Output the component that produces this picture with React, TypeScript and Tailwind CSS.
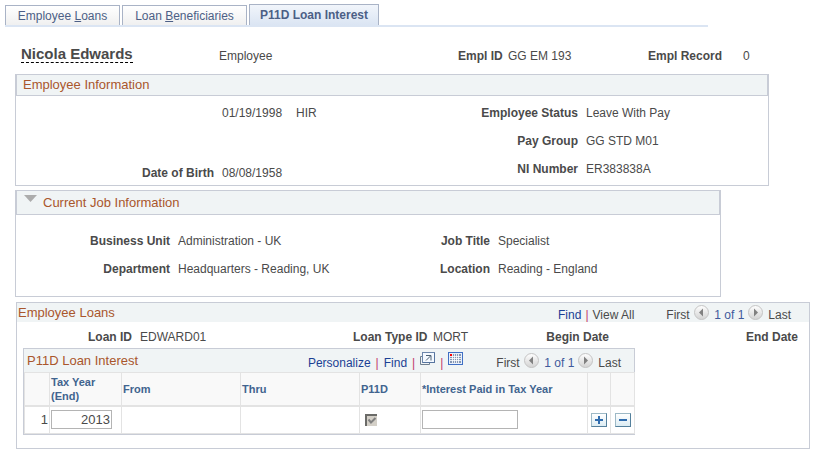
import type { ReactNode } from "react";

const tabs = [
  { before: "Employee ", key: "L", after: "oans", width: "w-[115px]" },
  { before: "Loan ", key: "B", after: "eneficiaries", width: "w-[125px]" },
];

const Label = ({ children }: { children: ReactNode }) => (
  <dt className="text-right font-bold whitespace-nowrap">{children}</dt>
);

const Value = ({ children }: { children?: ReactNode }) => <dd className="whitespace-nowrap">{children}</dd>;

const Bar = () => <span className="text-[#c0396b]">|</span>;

const Arrow = ({ dir }: { dir: "prev" | "next" }) => (
  <button type="button" aria-label={dir === "prev" ? "Previous" : "Next"} className="mb-1 shrink-0">
    <svg width="15" height="15" viewBox="0 0 15 15" className="block">
      <defs>
        <linearGradient id={`disc-${dir}`} x1="0" y1="0" x2="0" y2="1">
          <stop offset="0" stopColor="#ffffff" />
          <stop offset="1" stopColor="#d2d2d2" />
        </linearGradient>
      </defs>
      <circle cx="7.5" cy="7.5" r="7" fill={`url(#disc-${dir})`} stroke="#c4c4c4" />
      <path d={dir === "prev" ? "M9 3.5v8L5 7.5z" : "M6 3.5v8l4-4z"} fill="#808080" />
    </svg>
  </button>
);

const Pager = () => (
  <div className="flex items-center whitespace-nowrap">
    <span className="w-7">First</span>
    <Arrow dir="prev" />
    <span className="mx-[5px] w-[29px] text-center text-[#3f5a9c]">1 of 1</span>
    <Arrow dir="next" />
    <span className="ml-[5px]">Last</span>
  </div>
);

const PopOutIcon = () => (
  <svg width="15" height="14" viewBox="0 0 15 14" className="block">
    <path d="M2.5 4.5h-2v8h9v-2" fill="none" stroke="#6f7f90" />
    <rect x="2.5" y="0.5" width="12" height="10" fill="#f4f9ff" stroke="#6c86ab" />
    <path d="M3 10.5h11.5V1" fill="none" stroke="#56749f" />
    <path d="M6 3.5h5v5M10.5 4L6 8.5" fill="none" stroke="#4c6173" />
  </svg>
);

const GridIcon = () => (
  <svg width="15" height="14" viewBox="0 0 15 14" className="block">
    <rect x="0.5" y="0.5" width="14" height="12" fill="#e8f0fb" stroke="#3f6fc4" />
    <rect x="2" y="2" width="11" height="9" fill="#8496b3" />
    <path d="M2 4.5h11M2 6.5h11M2 8.5h11M4.5 2v9M6.5 2v9M8.5 2v9M10.5 2v9" stroke="#fff" strokeWidth="0.8" />
    <rect x="2" y="2" width="2" height="2" fill="#ff0000" />
  </svg>
);

const RowButton = ({ kind }: { kind: "add" | "delete" }) => (
  <button
    type="button"
    aria-label={kind === "add" ? "Add row" : "Delete row"}
    className="mx-auto flex h-[14px] w-4 items-center justify-center border border-t-[#9db9c6] border-r-[#54809c] border-b-[#54809c] border-l-[#9db9c6] bg-gradient-to-b from-white to-[#dcecf3]"
  >
    <svg width="8" height="8" viewBox="0 0 8 8">
      <path d={kind === "add" ? "M0 4h8M4 0v8" : "M0 4h8"} stroke="#2f6cae" strokeWidth="2" />
    </svg>
  </button>
);

const headers = [
  { text: "", width: "w-[25px]" },
  { text: "Tax Year (End)", width: "w-[72px]" },
  { text: "From", width: "w-[119px]" },
  { text: "Thru", width: "w-[119px]" },
  { text: "P11D", width: "w-[61px]" },
  { text: "*Interest Paid in Tax Year", width: "w-[167px]" },
  { text: "", width: "w-[23px]" },
  { text: "", width: "w-[24px]" },
];

export default function App() {
  return (
    <div className="bg-white pt-1 font-['Liberation_Sans',Arial,sans-serif] text-[12px] leading-4 text-[#4a4a4a]">
      <nav className="ml-[5px] flex w-full max-w-[703px] items-end border-b-2 border-[#dbe5f3] text-[#4c5f86]">
        {tabs.map((t) => (
          <a
            key={t.key}
            href="#"
            className={`mr-[2px] flex h-5 items-center justify-center border border-b-0 border-[#a9b3c6] bg-gradient-to-b from-white to-[#f0f0f0] whitespace-nowrap ${t.width}`}
          >
            <span>
              {t.before}
              <u>{t.key}</u>
              {t.after}
            </span>
          </a>
        ))}
        <a
          href="#"
          aria-current="page"
          className="flex h-[21px] w-[130px] items-center justify-center border border-b-0 border-[#a9b3c6] bg-gradient-to-b from-[#f1f5fb] to-[#dbe5f3] font-bold whitespace-nowrap"
        >
          P11D Loan Interest
        </a>
      </nav>

      <header className="grid h-[47px] grid-cols-[190px_1fr_42px_132px_72px_88px] items-start gap-x-2 pt-[18px] pr-[15px] pl-[21px]">
        <h1>
          <span className="inline-block border-b border-dashed border-black text-[15px] leading-[17px] font-bold">
            Nicola Edwards
          </span>
        </h1>
        <span className="pt-[3px]">Employee</span>
        <span className="pt-[3px] text-right font-bold whitespace-nowrap">Empl ID</span>
        <span className="pt-[3px]">GG EM 193</span>
        <span className="pt-[3px] text-right font-bold whitespace-nowrap">Empl Record</span>
        <span className="pt-[3px] pl-[15px]">0</span>
      </header>

      <main className="pr-[21px] pl-[15px]">
        <section className="mb-1 w-full max-w-[754px] border border-[#c8ccd6]">
          <h2 className="flex h-[21px] items-center border-x border-b border-[#c8ccd6] bg-[#f0f4f5] pl-[6px] text-[13px] text-[#a9562c]">
            Employee Information
          </h2>
          <div className="flex items-start justify-between pt-[3px] pb-[2px] leading-7">
            <dl className="grid grid-cols-[198px_1fr] gap-x-2 gap-y-9">
              <Label> </Label>
              <dd className="flex gap-[14px]">
                <span>01/19/1998</span>
                <span>HIR</span>
              </dd>
              <dt className="text-right leading-5 font-bold">Date of Birth</dt>
              <dd className="leading-5">08/08/1958</dd>
            </dl>
            <dl className="grid grid-cols-[110px_182px] gap-x-2">
              <Label>Employee Status</Label>
              <Value>Leave With Pay</Value>
              <Label>Pay Group</Label>
              <Value>GG STD M01</Value>
              <Label>NI Number</Label>
              <Value>ER383838A</Value>
            </dl>
          </div>
        </section>

        <section className="mb-[5px] w-full max-w-[706px] border border-[#c8ccd6]">
          <h2 className="flex h-6 items-center border-x border-b border-[#c8ccd6] bg-[#f0f4f5] pl-[7px] text-[13px] text-[#a9562c]">
            <button type="button" aria-label="Collapse section" className="mr-[6px] mb-2">
              <svg width="13" height="7" viewBox="0 0 13 7" className="block">
                <path d="M0 0h13L6.5 7z" fill="#acacac" />
              </svg>
            </button>
            Current Job Information
          </h2>
          <dl className="grid grid-cols-[154px_1fr_60px_222px] gap-x-2 pt-3 pb-[13px] leading-7">
            <Label>Business Unit</Label>
            <Value>Administration - UK</Value>
            <Label>Job Title</Label>
            <Value>Specialist</Value>
            <Label>Department</Label>
            <Value>Headquarters - Reading, UK</Value>
            <Label>Location</Label>
            <Value>Reading - England</Value>
          </dl>
        </section>

        <section className="ml-px border border-[#c8ccd6] pb-[13px]">
          <div className="flex h-[19px] items-center justify-between bg-[#f0f4f5] pr-[18px] pl-px">
            <h2 className="text-[13px] text-[#a9562c]">Employee Loans</h2>
            <div className="flex items-center gap-8 pt-1">
              <div className="flex gap-1 whitespace-nowrap">
                <a href="#" className="text-[#1b3f94]">Find</a>
                <Bar />
                <span>View All</span>
              </div>
              <Pager />
            </div>
          </div>
          <dl className="grid grid-cols-[115px_1fr_72px_100px_68px_181px] gap-x-2 pt-[7px] pr-[11px] pb-[3px]">
            <Label>Loan ID</Label>
            <Value>EDWARD01</Value>
            <Label>Loan Type ID</Label>
            <Value>MORT</Value>
            <Label>Begin Date</Label>
            <Label>End Date</Label>
          </dl>

          <div className="ml-[6px] w-full max-w-[612px] border border-[#c8ccd6]">
            <div className="flex h-[23px] items-center justify-between bg-[#f0f4f5] pr-[13px] pl-[3px]">
              <h3 className="text-[13px] text-[#a9562c]">P11D Loan Interest</h3>
              <div className="flex items-center gap-[33px] pt-1">
                <div className="flex items-center gap-[5px] whitespace-nowrap">
                  <a href="#" className="text-[#1b3f94]">Personalize</a>
                  <Bar />
                  <a href="#" className="text-[#1b3f94]">Find</a>
                  <Bar />
                  <button type="button" aria-label="View in new window" className="mb-2"><PopOutIcon /></button>
                  <Bar />
                  <button type="button" aria-label="Download table" className="mb-2"><GridIcon /></button>
                </div>
                <Pager />
              </div>
            </div>
            <table className="w-full table-fixed border-collapse">
              <thead>
                <tr className="h-[33px] border-t border-b-2 border-[#e3e3e3] bg-[#f9f9f9] text-left text-[11px] leading-[14px] text-[#41648f]">
                  {headers.map((h, i) => (
                    <th key={i} className={`border-x border-[#e3e3e3] p-px font-bold ${h.width}`}>
                      {h.text}
                    </th>
                  ))}
                </tr>
              </thead>
              <tbody>
                <tr className="h-[28px] border-b border-[#e3e3e3] text-[13px] [&>td]:border-x [&>td]:border-[#e3e3e3] [&>td]:p-px">
                  <td className="text-right">1</td>
                  <td>
                    <input aria-label="Tax Year (End)" defaultValue="2013" className="block h-[19px] w-[61px] border border-[#b4b4b4] pr-px text-right" />
                  </td>
                  <td></td>
                  <td></td>
                  <td>
                    <div className="relative ml-1 h-3 w-3">
                      <input
                        type="checkbox"
                        aria-label="P11D"
                        defaultChecked
                        disabled
                        className="block h-3 w-3 appearance-none border-t-2 border-l-2 border-[#6b6b68] bg-[#d4d0c8]"
                      />
                      <svg width="12" height="12" viewBox="0 0 12 12" className="pointer-events-none absolute top-0 left-0">
                        <path d="M3.5 5.5l2.5 3L10.5 4" fill="none" stroke="#808080" strokeWidth="2" />
                      </svg>
                    </div>
                  </td>
                  <td>
                    <input aria-label="Interest Paid in Tax Year" className="block h-[19px] w-24 border border-[#b4b4b4] px-1" />
                  </td>
                  <td><RowButton kind="add" /></td>
                  <td><RowButton kind="delete" /></td>
                </tr>
              </tbody>
            </table>
          </div>
        </section>
      </main>
    </div>
  );
}
